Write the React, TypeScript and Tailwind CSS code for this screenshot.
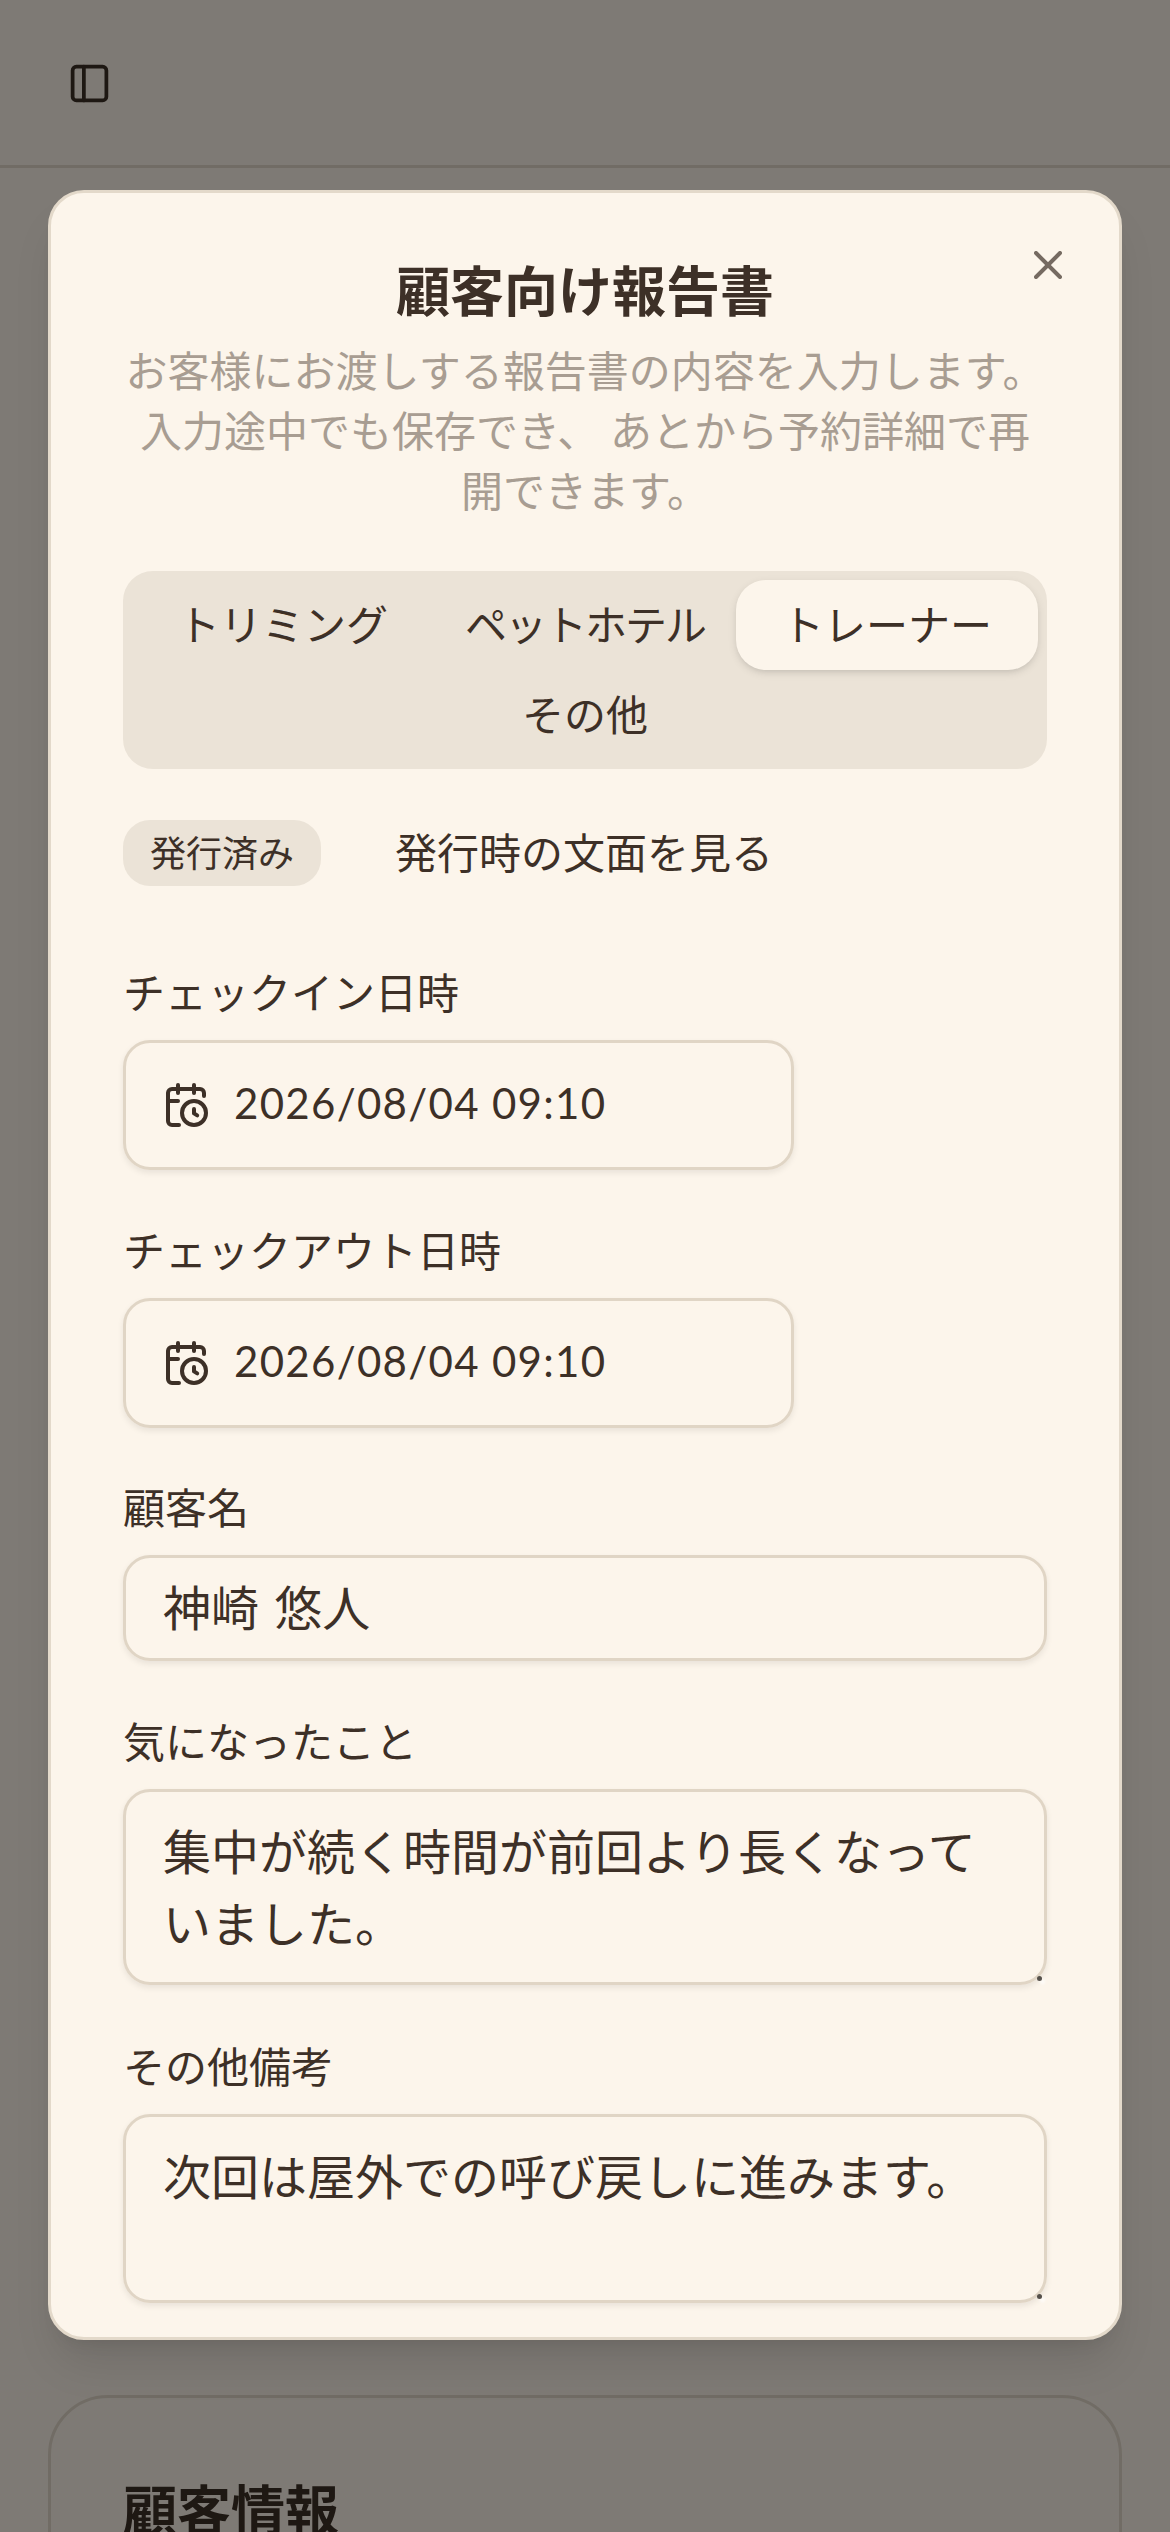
import React from "react";
import { CalendarClock, PanelLeft, X } from "lucide-react";

const tabs = ["トリミング", "ペットホテル", "トレーナー", "その他"];

const Label: React.FC<{ children: React.ReactNode }> = ({ children }) => (
  <label className="block text-[42px] leading-[42px] text-[#3d3027] mb-[26px]">{children}</label>
);

const DateField: React.FC<{ label: string; value: string; className: string }> = ({ label, value, className }) => (
  <div className={className}>
    <Label>{label}</Label>
    <button className="flex items-center gap-[24px] w-[671px] h-[130px] pl-[37px] border-[3px] border-[#e0d5c5] rounded-[27px] shadow-[0_3px_6px_rgba(0,0,0,0.08)] text-[42px] text-[#3d3027]">
      <CalendarClock className="w-[48px] h-[48px] shrink-0 -ml-[1px]" strokeWidth={2} />
      <span className="tracking-[1.3px] mb-[4px]">{value}</span>
    </button>
  </div>
);

const NoteField: React.FC<{ label: string; value: string; height: string; className?: string }> = ({ label, value, height, className }) => (
  <div className={className}>
    <Label>{label}</Label>
    <div className="relative">
      <textarea
        defaultValue={value}
        className={`block w-full ${height} px-[37px] py-[24px] border-[3px] border-[#e0d5c5] rounded-[27px] shadow-[0_3px_6px_rgba(0,0,0,0.08)] text-[48px] leading-[72px] text-[#3d3027] bg-transparent resize-none outline-none overflow-hidden`}
      />
      {/* what is left of the resize grip after the rounded corner */}
      <span className="absolute right-[5px] bottom-[4px] w-[5px] h-[5px] rounded-full bg-[#55504a] shadow-[3px_3px_3px_rgba(255,255,255,0.8)]" />
    </div>
  </div>
);

export default function App() {
  return (
    <div className="relative w-[1170px] h-[2532px] overflow-hidden bg-[#fcf5eb] font-[Lato,'Noto_Sans_CJK_JP',sans-serif]">
      {/* Page behind the dialog */}
      <header className="h-[168px] border-b-[3px] border-[#e3d9ca] flex items-center pl-[67px] pt-[2px]">
        <PanelLeft className="w-[45px] h-[45px] text-[#3d3027]" strokeWidth={2} />
      </header>
      <section className="mx-[48px] mt-[2227px] h-[600px] border-[3px] border-[#e3d9ca] rounded-[60px] px-[72px] pt-[72px]">
        <h2 className="text-[54px] leading-[81px] font-bold text-[#3d3027]">顧客情報</h2>
      </section>

      {/* Dialog overlay */}
      <div className="absolute inset-0 bg-black/50 flex items-center justify-center pb-[2px]">
        <div className="relative w-[1074px] h-[2150px] overflow-hidden bg-[#fcf5eb] border-[3px] border-[#e3d9ca] rounded-[36px] shadow-[0_30px_45px_-9px_rgba(0,0,0,0.1),0_12px_18px_-12px_rgba(0,0,0,0.1)] px-[72px] pt-[72px]">
          <button className="absolute top-[48px] right-[47px] text-[#3d3027] opacity-70">
            <X className="w-[48px] h-[48px]" strokeWidth={2} />
          </button>

          <h1 className="text-[54px] leading-[54px] font-bold text-center text-[#3d3027]">顧客向け報告書</h1>
          <p className="mt-[22px] text-[42px] leading-[60px] text-center text-[#a89d92]">
            お客様にお渡しする報告書の内容を入力します。 入力途中でも保存でき、 あとから予約詳細で再開できます。
          </p>

          <div className="mt-[50px] flex flex-wrap justify-center p-[9px] bg-[#ebe3d7] rounded-[30px]">
            {tabs.map((tab) => (
              <button
                key={tab}
                className={`w-[302px] h-[90px] rounded-[30px] text-[42px] text-[#3d3027] ${tab === "トレーナー" ? "bg-[#fcf5eb] shadow-[0_3px_9px_rgba(0,0,0,0.1),0_3px_6px_-3px_rgba(0,0,0,0.1)]" : ""} ${tab === "ペットホテル" ? "tracking-[-2px]" : ""}`}
              >
                {tab}
              </button>
            ))}
          </div>

          <div className="mt-[51px] mb-[86px] flex items-center gap-[74px]">
            <span className="flex items-center justify-center w-[198px] h-[66px] rounded-[27px] bg-[#ebe3d7] text-[36px] text-[#3d3027]">発行済み</span>
            <button className="text-[42px] text-[#3d3027]">発行時の文面を見る</button>
          </div>

          <DateField label="チェックイン日時" value="2026/08/04 09:10" className="mb-[60px]" />
          <DateField label="チェックアウト日時" value="2026/08/04 09:10" className="mb-[59px]" />

          <div className="mb-[60px]">
            <Label>顧客名</Label>
            <div className="flex items-center w-full h-[106px] px-[37px] border-[3px] border-[#e0d5c5] rounded-[27px] shadow-[0_3px_6px_rgba(0,0,0,0.08)] text-[48px] leading-[72px] [word-spacing:3px] text-[#3d3027]">
              神崎 悠人
            </div>
          </div>

          <NoteField label="気になったこと" value="集中が続く時間が前回より長くなっていました。" height="h-[196px]" className="mb-[61px]" />
          <NoteField label="その他備考" value="次回は屋外での呼び戻しに進みます。" height="h-[189px]" />
        </div>
      </div>
    </div>
  );
}
